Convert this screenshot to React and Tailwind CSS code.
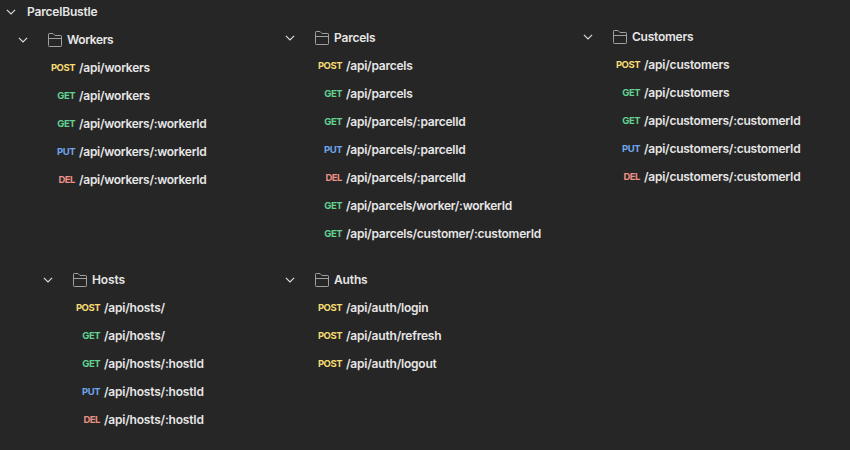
const COLORS = {
  POST: 'text-[#f5dc72]',
  GET: 'text-[#62d191]',
  PUT: 'text-[#6fa5ec]',
  DEL: 'text-[#ec8f84]',
};

function Chevron({ className = '' }) {
  return (
    <svg width="10" height="6" viewBox="0 0 10 6" fill="none" stroke="#e0e0e0" strokeWidth="1.1" className={`shrink-0 ${className}`}>
      <path d="M0.9 0.9L5 5L9.1 0.9" />
    </svg>
  );
}

function Folder() {
  return (
    <svg width="14" height="14" viewBox="0 0 14 14" fill="none" stroke="#a0a0a0" strokeLinejoin="round" className="shrink-0">
      <path d="M0.5 12.5V1.2Q0.5 0.5 1.2 0.5H5L7 2.5H12.8Q13.5 2.5 13.5 3.2V12.8Q13.5 13.5 12.8 13.5H1.2Q0.5 13.5 0.5 12.8M0.5 5.5H13.5" />
    </svg>
  );
}

function Group({ name, rows, className = '', titleClass = '' }) {
  return (
    <section className={className}>
      <div className="flex h-7 items-center">
        <Chevron />
        <div className="w-5 shrink-0" />
        <Folder />
        <h2 className={`pl-[5px] ${titleClass}`}>{name}</h2>
      </div>
      {rows.map(([method, path, tracking], i) => (
        <div key={i} className="flex h-7 items-center whitespace-nowrap">
          <span className={`w-[61px] pr-1 text-right text-[9.5px] font-bold tracking-[-0.5px] ${COLORS[method]}`}>{method}</span>
          <span className={tracking}>{path}</span>
        </div>
      ))}
    </section>
  );
}

const TIGHT = 'tracking-[-0.28px]';
const SNUG = 'tracking-[-0.24px]';
const LOOSE = 'tracking-[-0.2px]';

export default function App() {
  return (
    <main className="h-[450px] w-[850px] overflow-hidden bg-[#262626] font-['Inter',sans-serif] text-[12px] font-semibold text-[#e6e6e6]">
      <header className="flex h-6 items-center pl-[6px]">
        <Chevron />
        <h1 className="pl-[11px] tracking-[-0.18px]">ParcelBustle</h1>
      </header>
      <div className="flex h-[242px] items-start">
        <Group className="w-[267px] pl-[18px] pt-[2px]" titleClass="tracking-[-0.38px]" name="Workers" rows={[['POST', '/api/workers', SNUG], ['GET', '/api/workers', SNUG], ['GET', '/api/workers/:workerId', TIGHT], ['PUT', '/api/workers/:workerId', TIGHT], ['DEL', '/api/workers/:workerId', TIGHT]]} />
        <Group className="w-[298px] pl-[18px]" titleClass={LOOSE} name="Parcels" rows={[['POST', '/api/parcels', SNUG], ['GET', '/api/parcels', SNUG], ['GET', '/api/parcels/:parcelId', SNUG], ['PUT', '/api/parcels/:parcelId', SNUG], ['DEL', '/api/parcels/:parcelId', SNUG], ['GET', '/api/parcels/worker/:workerId', TIGHT], ['GET', '/api/parcels/customer/:customerId', SNUG]]} />
        <Group className="-mt-px pl-[18px]" titleClass={SNUG} name="Customers" rows={[['POST', '/api/customers', LOOSE], ['GET', '/api/customers', LOOSE], ['GET', '/api/customers/:customerId', SNUG], ['PUT', '/api/customers/:customerId', SNUG], ['DEL', '/api/customers/:customerId', SNUG]]} />
      </div>
      <div className="flex items-start">
        <Group className="w-[267px] pl-[43px]" titleClass="tracking-[-0.15px]" name="Hosts" rows={[['POST', '/api/hosts/', LOOSE], ['GET', '/api/hosts/', LOOSE], ['GET', '/api/hosts/:hostId', LOOSE], ['PUT', '/api/hosts/:hostId', LOOSE], ['DEL', '/api/hosts/:hostId', LOOSE]]} />
        <Group className="pl-[18px]" titleClass="tracking-[-0.15px]" name="Auths" rows={[['POST', '/api/auth/login', LOOSE], ['POST', '/api/auth/refresh', LOOSE], ['POST', '/api/auth/logout', LOOSE]]} />
      </div>
    </main>
  );
}
